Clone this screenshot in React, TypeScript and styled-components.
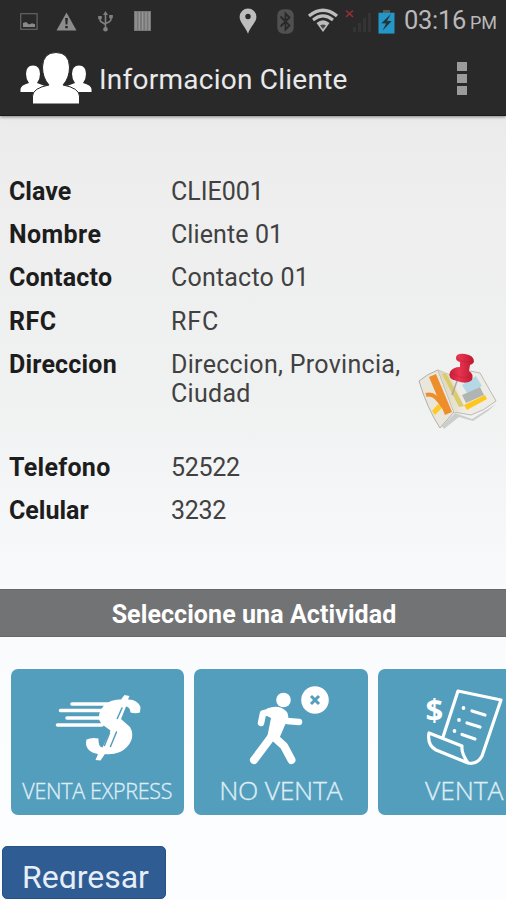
import React from "react";
import styled, { createGlobalStyle } from "styled-components";

const GlobalStyle = createGlobalStyle`
  * { box-sizing: border-box; }
  html, body { margin: 0; padding: 0; background: #fcfdff; overflow: hidden; }
  svg { display: block; flex: none; overflow: visible; }
`;

const Screen = styled.main`
  display: flex;
  flex-direction: column;
  width: 506px;
  height: 900px;
  overflow: hidden;
  font-family: Roboto, "Liberation Sans", sans-serif;
  background: linear-gradient(#ebebeb 116px, #eeeeee 190px, #f0f1f1 400px, #f9fafc 590px, #fcfdff 760px);
`;

const TopChrome = styled.header`
  height: 116px;
  flex: none;
  background: #29292a;
  border-bottom: 1px solid #1b1b1b;
  box-shadow: 0 1px 3px rgba(0, 0, 0, 0.45);
`;

const StatusBar = styled.div`
  display: flex;
  justify-content: space-between;
  height: 42px;
  padding: 0 9px 0 20px;
`;

const Notifications = styled.div`
  display: flex;
  align-items: center;
`;

const SystemStatus = styled.div`
  display: flex;
  align-items: center;
`;

const Gap = styled.span<{ $w: number }>`
  width: ${(p) => p.$w}px;
  flex: none;
`;

const Clock = styled.span`
  display: flex;
  align-items: baseline;
  width: 93px;
  color: #b9b9b9;
  font-size: 25.5px;
  line-height: 43px;
  letter-spacing: -0.3px;
  white-space: nowrap;
`;

const Meridiem = styled.small`
  margin-left: 4px;
  font-size: 18px;
  letter-spacing: 0;
`;

const ActionBar = styled.div`
  display: flex;
  align-items: center;
  height: 73px;
  padding: 0 39px 0 20px;
`;

const Title = styled.h1`
  flex: 1;
  margin: 2px 0 0 7px;
  color: #e9e9e9;
  font-size: 28px;
  font-weight: 400;
  line-height: 34px;
  letter-spacing: 0.24px;
  white-space: nowrap;
`;

const Overflow = styled.button`
  display: grid;
  gap: 2.5px;
  padding: 0;
  border: 0;
  background: none;
`;

const OverflowDot = styled.i`
  width: 10px;
  height: 9.5px;
  background: #9b9b9b;
`;

const Details = styled.dl`
  display: grid;
  grid-template-columns: 162px 240px 1fr;
  grid-template-rows: 43.2px 43.2px 43.2px 43.2px 103.2px 43.2px 43.2px;
  height: 473px;
  flex: none;
  margin: 0;
  padding: 61px 0 0 9px;
`;

const Term = styled.dt<{ $spacing?: number }>`
  grid-column: 1;
  color: #1d1d1d;
  font-size: 25px;
  font-weight: 700;
  line-height: 29px;
  letter-spacing: ${(p) => p.$spacing ?? 0.2}px;
`;

const Value = styled.dd<{ $spacing?: number }>`
  grid-column: 2;
  margin: 0;
  color: #414141;
  font-size: 25px;
  line-height: 29px;
  letter-spacing: ${(p) => p.$spacing ?? 0.3}px;
  white-space: pre-line;
`;

const MapButton = styled.dd`
  grid-column: 3;
  margin: 0;
  padding: 3px 0 0 7px;
`;

const SectionTitle = styled.h2`
  height: 48px;
  flex: none;
  margin: 0;
  border-top: 1px solid #666768;
  border-bottom: 1px solid #666768;
  background: #727375;
  color: #ffffff;
  font-size: 25px;
  font-weight: 700;
  line-height: 50px;
  letter-spacing: 0.08px;
  text-align: center;
  padding-left: 2px;
`;

const Activities = styled.div`
  display: flex;
  gap: 10px;
  height: 178px;
  flex: none;
  padding: 32px 0 0 10.5px;
`;

const Activity = styled.button`
  display: flex;
  flex-direction: column;
  align-items: center;
  width: 173.5px;
  height: 146px;
  flex: none;
  padding: 0;
  border: 0;
  border-radius: 7px;
  background: #539dbd;
`;

const ActivityName = styled.span<{ $size: number; $spacing: number; $leading?: number }>`
  color: #deedf5;
  font-family: "Open Sans", "Noto Sans", sans-serif;
  font-size: ${(p) => p.$size}px;
  font-weight: 300;
  -webkit-text-stroke: 0.35px #deedf5;
  line-height: ${(p) => p.$leading ?? 32}px;
  letter-spacing: ${(p) => p.$spacing}px;
  white-space: nowrap;
`;

const BackButton = styled.button`
  display: flex;
  align-items: flex-start;
  width: 164px;
  height: 53px;
  flex: none;
  margin: 31px 0 0 2px;
  padding: 10px 0 0 19px;
  border: 1px solid #285283;
  border-radius: 5px;
  background: #2f5c92;
  text-align: left;
  font-family: inherit;
`;

const BackLabel = styled.span`
  display: block;
  height: 32px;
  overflow: hidden;
  color: #e6eef8;
  font-size: 32px;
  line-height: 40px;
  white-space: nowrap;
`;

const PictureIcon = () => (
  <svg width="18" height="17" viewBox="0 0 18 17">
    <rect x="0.7" y="0.7" width="16.4" height="15.6" fill="none" stroke="#646464" strokeWidth="1.2" />
    <path d="M3 14V10l3-1 3 2.5 3-1.2 3 1V14Z" fill="#8a8a8a" />
  </svg>
);

const WarningIcon = () => (
  <svg width="21" height="19" viewBox="0 0 21 19">
    <path d="M10.5.5 20.5 18.5H.5Z" fill="#8c8c8c" />
    <path d="M9.1 6h2.8l-.5 6.5H9.6ZM9.2 14h2.6v2.3H9.2Z" fill="#29292a" />
  </svg>
);

const UsbIcon = () => (
  <svg width="15" height="21" viewBox="0 0 15 21">
    <g fill="none" stroke="#808080" strokeWidth="1.6">
      <path d="M7.5 3V18M2 6V8.5Q2 10.5 4 11.3L7.5 13.5M13 5V8Q13 10 11 11L7.5 12.5" />
    </g>
    <path d="M7.5 0 10 4H5ZM.2 5h3.6v3.2H.2ZM11.2 4h3.6v3.2h-3.6Z" fill="#808080" />
    <circle cx="7.5" cy="18.3" r="2.3" fill="#808080" />
  </svg>
);

const BarsIcon = () => (
  <svg width="17" height="20" viewBox="0 0 17 20">
    <path d="M0 0h17v20H0Z" fill="#777" />
    <path d="M2 1v18M5.3 1v18M8.6 1v18M12 1v18M15.2 1v18" stroke="#969696" strokeWidth="1.4" />
  </svg>
);

const LocationIcon = () => (
  <svg width="18" height="26" viewBox="0 0 18 26">
    <path fillRule="evenodd" fill="#bdbdbd" d="M9 .5a8.4 8.4 0 0 0-8.4 8.4C.6 14 6 18 9 25.7 12 18 17.4 14 17.4 8.9A8.4 8.4 0 0 0 9 .5Zm0 5.3a2.7 2.7 0 1 1 0 5.4 2.7 2.7 0 0 1 0-5.4Z" />
  </svg>
);

const BluetoothIcon = () => (
  <svg width="17" height="25" viewBox="0 0 17 25">
    <rect x="0.3" y="0.3" width="16.4" height="24.4" rx="6" fill="#505050" />
    <path d="M3.5 7.5 12.5 16.5 8.5 20.5V4.5L12.5 8.5 3.5 17.5" fill="none" stroke="#29292a" strokeWidth="1.8" />
  </svg>
);

const WifiIcon = () => (
  <svg width="30" height="24" viewBox="0 0 30 24">
    <g fill="none" stroke="#bdbdbd">
      <path d="M1 7Q15-4.5 29 7" strokeWidth="3.4" />
      <path d="M5 11Q15 2.8 25 11" strokeWidth="3" />
    </g>
    <path d="M8.5 14Q15 8.5 21.5 14L15 23Z" fill="#bdbdbd" />
    <path d="M12 16.5Q15 14.3 18 16.5L15 20Z" fill="#4a4a4a" />
  </svg>
);

const SignalIcon = () => (
  <svg width="26" height="24" viewBox="0 0 26 24">
    <path d="M1 1.5 8 8M8 1.5 1 8" stroke="#8f3038" strokeWidth="1.7" />
    <path d="M8 18h3v5H8ZM13 14h3v9h-3ZM18 9h3v14h-3ZM23 4h3v19h-3Z" fill="#343434" />
  </svg>
);

const BatteryIcon = () => (
  <svg width="17" height="25" viewBox="0 0 17 25">
    <path d="M5 1h7v4H5Z" fill="#5a5a5a" />
    <path d="M.5 3.7h16V24.6H.5Z" fill="#2397c6" />
    <path d="M13 5 3.3 14.2 8 14.6 4.6 21.5 13.6 12.2 9 11.7Z" fill="#26343b" />
  </svg>
);

const ClientsIcon = () => (
  <svg width="72" height="53" viewBox="0 0 72 53">
    <g fill="#fff">
      <path d="M.5 40v-3Q1 33 9 31q-3-4-3-9 0-8.5 7-8.5T20 22q0 5-3 9l8 3v6Z" />
      <path d="M71.500 40v-3Q71 33 63 31q3-4 3-9 0-8.500-7-8.500T52 22q0 5 3 9l-8 3v6Z" />
      <path d="M12.500 52V44Q13 36 29 33 22.500 26 22.500 15 23 .5 36 .5T49.500 15q0 11-6.500 18Q59 36 59.500 44v8Z" stroke="#29292a" strokeWidth="1" />
    </g>
  </svg>
);

const MapIcon = () => (
  <svg width="80" height="78" viewBox="0 0 80 78">
    <defs>
      <linearGradient id="fold" x1="0" x2="1">
        <stop offset="0" stopColor="#d9d5bd" />
        <stop offset="1" stopColor="#f1ede3" />
      </linearGradient>
      <linearGradient id="pin" x1="0" x2="1">
        <stop offset="0" stopColor="#c41d38" />
        <stop offset=".4" stopColor="#e83450" />
        <stop offset="1" stopColor="#be1831" />
      </linearGradient>
    </defs>
    <path d="M24 73 37 60 54 66 78 51 70 58 55 68 41 64 26 76Z" fill="#777" opacity=".3" />
    <path d="M1 28Q9 21 20 17L36 59 22 75Q9 55 1 28Z" fill="#e9e6dc" stroke="#b3b0a6" />
    <path d="M20 17 32 22Q44 20 52 18L62 20 78 48Q66 58 53 62L36 59Z" fill="#eeece6" stroke="#bcbab1" />
    <path d="M20 17 32 22 50 58 36 59Z" fill="url(#fold)" />
    <path d="M24 21 28 20 46 53 41 54Z" fill="#dccb6c" />
    <path d="M11 24 18 21 34 59 27 62Z" fill="#ee8d2b" />
    <path d="M8 42Q17 39 25 54" fill="none" stroke="#ee8d2b" strokeWidth="4" />
    <path d="m14 58 6-7 4 4-7 7Z" fill="#ffc928" />
    <path d="m44 32 14-9 6 10-15 7Z" fill="#b5d8e7" />
    <path d="m44 42 18-8 4 8-18 8Z" fill="#b0b5b3" />
    <path d="m46 52 21-10 2 4-20 11Z" fill="#ffc71e" />
    <path d="M39 28 34 42" stroke="#aaa" strokeWidth="1.600" />
    <path d="M38 5Q38 0 47 1T56 9Q54 12 52 12L51 18Q56 21 54 27 49 32 39 28 29 26 32 19 35 14 42 14L42 9Q38 8 38 5Z" fill="url(#pin)" />
    <path d="M39 6Q46 10 55 9M34 20Q41 26 52 24" fill="none" stroke="#a31730" strokeWidth="1" opacity=".3" />
  </svg>
);

const ExpressIcon = () => (
  <svg width="173.5" height="105" viewBox="0 0 173.5 105">
    <path d="M61 35H99M49.500 41.500H92M56 49H90M46.500 56H91" stroke="#fff" strokeWidth="3.600" strokeLinecap="round" />
    <path
      d="M110 30.500 113.500 26 118.500 27 117 30.500Q126 30 129.500 38L129 43.500Q124 45 119.500 43.500 119 38 115 37.500L110 50 119 58Q123 65 120 72 117 79 109 83 101 86 94 85L89.500 91.500 84.500 91 87 85Q80 84 77 80 74 76 75.500 70.500 81 68 87.500 69.500 87 78 91.500 78.500L99.500 61.500 90.500 55Q86.500 50 88.500 44 92 35 100 32 105 30 110 30.500Z"
      fill="#fff"
    />
    <path d="M111 39 106.300 49.500M98.500 64 93.500 76.500M105.500 63 99.500 77.500" stroke="#539dbd" strokeWidth="1.500" strokeLinecap="round" />
  </svg>
);

const NoSaleIcon = () => (
  <svg width="173.5" height="105" viewBox="0 0 173.5 105">
    <circle cx="89.500" cy="31" r="7.300" fill="#fff" />
    <g fill="none" stroke="#fff" strokeLinecap="round" strokeLinejoin="round">
      <path d="M77 42.500 69 44.500 67 54" strokeWidth="6.500" />
      <path d="M87 45 93 52 105 53" strokeWidth="6.500" />
      <path d="M78 67 60 91M79 67 90 77 97.500 91" strokeWidth="8" />
    </g>
    <path d="M73 39.500Q85 35 92 42 97 46 91 56L85 70 73 69 77 49 71 46Z" fill="#fff" />
    <circle cx="121" cy="31" r="13.800" fill="#fff" />
    <path d="M117 27 125 35M125 27 117 35" stroke="#539dbd" strokeWidth="3" />
  </svg>
);

const ReceiptDollar = styled.text`
  font: 700 31px "Open Sans", sans-serif;
  fill: #fff;
`;

const SaleIcon = () => (
  <svg width="173.5" height="105" viewBox="0 0 173.5 105">
    <ReceiptDollar x="47.500" y="51.500">$</ReceiptDollar>
    <g fill="none" stroke="#fff" strokeWidth="3.200" strokeLinejoin="round">
      <path d="M65 68 80 22 123 31 104 87Q99 96 90 94 83 84 84 77L51 64Q49 76 58 81L90 94" />
      <path d="M94 42 107 46M89 54 102 58M84 65.500 97 70" strokeLinecap="round" />
    </g>
    <g fill="#fff">
      <circle cx="85.500" cy="39" r="1.900" />
      <circle cx="81" cy="51" r="1.900" />
      <circle cx="76.500" cy="62" r="1.900" />
    </g>
  </svg>
);

export default function App() {
  return (
    <>
      <GlobalStyle />
      <Screen>
        <TopChrome>
          <StatusBar>
            <Notifications>
              <PictureIcon />
              <Gap $w={18} />
              <WarningIcon />
              <Gap $w={21} />
              <UsbIcon />
              <Gap $w={21} />
              <BarsIcon />
            </Notifications>
            <SystemStatus>
              <LocationIcon />
              <Gap $w={20} />
              <BluetoothIcon />
              <Gap $w={14} />
              <WifiIcon />
              <Gap $w={7} />
              <SignalIcon />
              <Gap $w={7} />
              <BatteryIcon />
              <Gap $w={9} />
              <Clock>03:16<Meridiem>PM</Meridiem></Clock>
            </SystemStatus>
          </StatusBar>
          <ActionBar>
            <ClientsIcon />
            <Title>Informacion Cliente</Title>
            <Overflow aria-label="Menu">
              <OverflowDot />
              <OverflowDot />
              <OverflowDot />
            </Overflow>
          </ActionBar>
        </TopChrome>
        <Details>
          <Term $spacing={0}>Clave</Term>
          <Value $spacing={0}>CLIE001</Value>
          <Term $spacing={0.4}>Nombre</Term>
          <Value $spacing={0.1}>Cliente 01</Value>
          <Term>Contacto</Term>
          <Value $spacing={0.2}>Contacto 01</Value>
          <Term $spacing={0.5}>RFC</Term>
          <Value $spacing={0.9}>RFC</Value>
          <Term>Direccion</Term>
          <Value>{"Direccion, Provincia,\nCiudad"}</Value>
          <MapButton><MapIcon /></MapButton>
          <Term $spacing={0.3}>Telefono</Term>
          <Value $spacing={-0.3}>52522</Value>
          <Term $spacing={0}>Celular</Term>
          <Value $spacing={-0.3}>3232</Value>
        </Details>
        <SectionTitle>Seleccione una Actividad</SectionTitle>
        <Activities>
          <Activity>
            <ExpressIcon />
            <ActivityName $size={21.5} $spacing={-0.3} $leading={34}>VENTA EXPRESS</ActivityName>
          </Activity>
          <Activity>
            <NoSaleIcon />
            <ActivityName $size={26.5} $spacing={-0.25}>NO VENTA</ActivityName>
          </Activity>
          <Activity>
            <SaleIcon />
            <ActivityName $size={26.5} $spacing={-0.1}>VENTA</ActivityName>
          </Activity>
        </Activities>
        <BackButton>
          <BackLabel>Regresar</BackLabel>
        </BackButton>
      </Screen>
    </>
  );
}
